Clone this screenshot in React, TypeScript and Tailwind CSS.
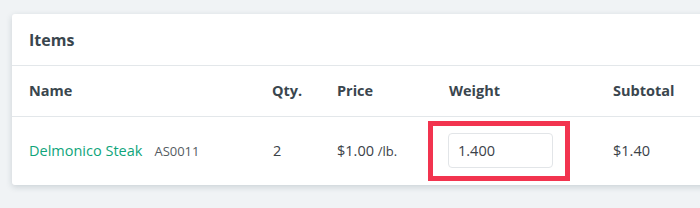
export default function App() {
  return (
    <div
      className="h-[208px] w-[700px] overflow-hidden bg-[#f0f3f5] pt-[14px] pl-[12px]"
      style={{ fontFamily: '"Open Sans", "Liberation Sans", sans-serif' }}
    >
      <div className="w-[720px] rounded-[3px] bg-white shadow-[0_2px_6px_rgba(40,60,80,0.18)]">
        {/* Card header */}
        <div className="flex h-[52px] items-center border-b border-[#e3e7ea] px-[17px]">
          <h2 className="text-[16px] font-bold text-[#3a464e]">Items</h2>
        </div>

        {/* Column headings */}
        <div className="grid h-[51px] grid-cols-[243px_65px_112px_164px_1fr] items-center border-b border-[#e3e7ea] px-[17px] text-[14.5px] font-bold text-[#3a464e]">
          <div>Name</div>
          <div>Qty.</div>
          <div>Price</div>
          <div>Weight</div>
          <div>Subtotal</div>
        </div>

        {/* Item row */}
        <div className="grid h-[68px] grid-cols-[243px_65px_112px_164px_1fr] items-center px-[17px] text-[14.5px] text-[#3b4248]">
          <div className="flex items-baseline">
            <span className="text-[#0fa57b]">Delmonico Steak</span>
            <span className="ml-[12px] text-[13px] text-[#555c62]">AS0011</span>
          </div>
          <div className="pl-[1px]">2</div>
          <div>
            $1.00 <span className="text-[13px]">/lb.</span>
          </div>
          <div className="flex">
            <div className="-ml-[21px] mt-[-1px] w-[142px] border-[5px] border-[#f2344f] pt-[7px] pb-[8px] pl-[15px]">
              <input
                readOnly
                value="1.400"
                className="h-[35px] w-[105px] rounded-[4px] border border-[#e2e5e8] px-[9px] text-[14.5px] text-[#3b4248] outline-none"
              />
            </div>
          </div>
          <div>$1.40</div>
        </div>
      </div>
    </div>
  );
}
